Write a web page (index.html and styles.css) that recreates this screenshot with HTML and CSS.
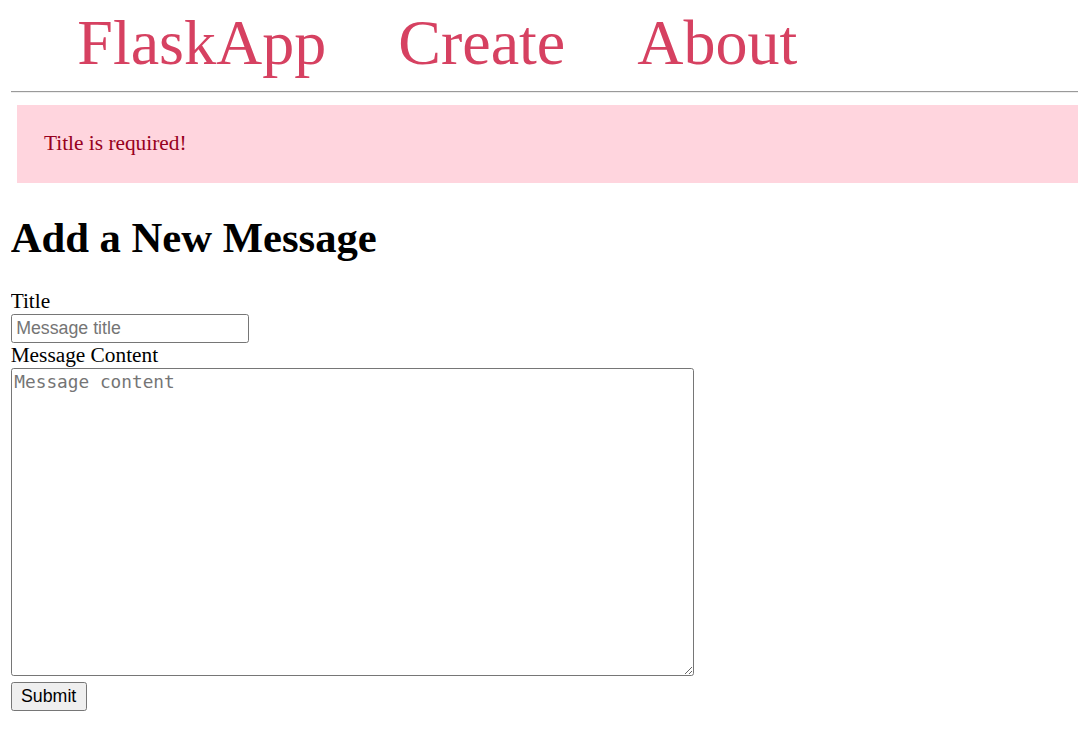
FILE: index.html
```
<!DOCTYPE html>
<html>
<head>
<meta charset="utf-8">
<title>Add a New Message - FlaskApp</title>
<link rel="stylesheet" href="styles.css">
</head>
<body>
<nav class="nav">
  <a class="nav-link" href="#">FlaskApp</a>
  <a class="nav-link" href="#">Create</a>
  <a class="nav-link" href="#">About</a>
</nav>
<hr class="rule">
<div class="content">
  <div class="alert">Title is required!</div>
  <h1 class="page-title">Add a New Message</h1>
  <form class="form" method="post">
    <label class="label" for="title">Title</label>
    <input class="input" type="text" id="title" name="title" placeholder="Message title">
    <label class="label" for="content">Message Content</label>
    <textarea class="textarea" id="content" name="content" placeholder="Message content"></textarea>
    <button class="button" type="submit">Submit</button>
  </form>
</div>
</body>
</html>
```

FILE: styles.css
```
html, body {
  background: #ffffff;
}

body {
  margin: 10.67px 0 0 10.67px;
  font-family: "Liberation Serif", "Times New Roman", serif;
  font-size: 21.33px;
  color: #000000;
}

.nav {
  display: flex;
  height: 64px;
  margin: 0;
}

.nav-link {
  color: #d64161;
  font-size: 64px;
  line-height: 64px;
  margin-left: 66.67px;
  text-decoration: none;
  display: block;
}

.nav-link + .nav-link {
  margin-left: 72px;
}

.rule {
  border: 0;
  height: 0;
  border-top: 1.33px solid #9a9a9a;
  border-bottom: 1.33px solid #eeeeee;
  margin: 16px 0 12px 0;
}

.content {
  display: block;
}

.alert {
  margin: 0 0 0 6.67px;
  padding: 26.67px;
  color: #970020;
  background-color: #ffd5de;
  line-height: normal;
}

.page-title {
  font-size: 42.67px;
  font-weight: bold;
  margin: 30.3px 0 26.5px 0;
  line-height: normal;
}

.form {
  display: flex;
  flex-direction: column;
  align-items: flex-start;
}

.label {
  line-height: normal;
}

.input {
  box-sizing: border-box;
  width: 238px;
  height: 29px;
  margin: 0;
  padding: 1.33px 2.67px 1.33px 4.5px;
  border: 1.33px solid #767676;
  border-radius: 2.67px;
  font-family: "Liberation Sans", Arial, sans-serif;
  font-size: 17.78px;
  color: #000;
  background: #fff;
}

.input::placeholder {
  color: #757575;
}

.textarea {
  box-sizing: border-box;
  width: 683px;
  height: 308px;
  margin: 0.5px 0 0 0;
  padding: 1.67px 2.67px 2.67px 2.67px;
  border: 1.33px solid #767676;
  border-radius: 2.67px;
  font-family: "DejaVu Sans Mono", monospace;
  font-size: 17.78px;
  color: #000;
  background: #fff;
}

.textarea::placeholder {
  color: #757575;
}

.button {
  box-sizing: border-box;
  width: 76px;
  height: 29px;
  margin: 6px 0 0 0;
  padding: 1.33px 8px;
  border: 1.33px solid #767676;
  border-radius: 2.67px;
  background: #efefef;
  font-family: "Liberation Sans", Arial, sans-serif;
  font-size: 17.78px;
  color: #000;
}
```
